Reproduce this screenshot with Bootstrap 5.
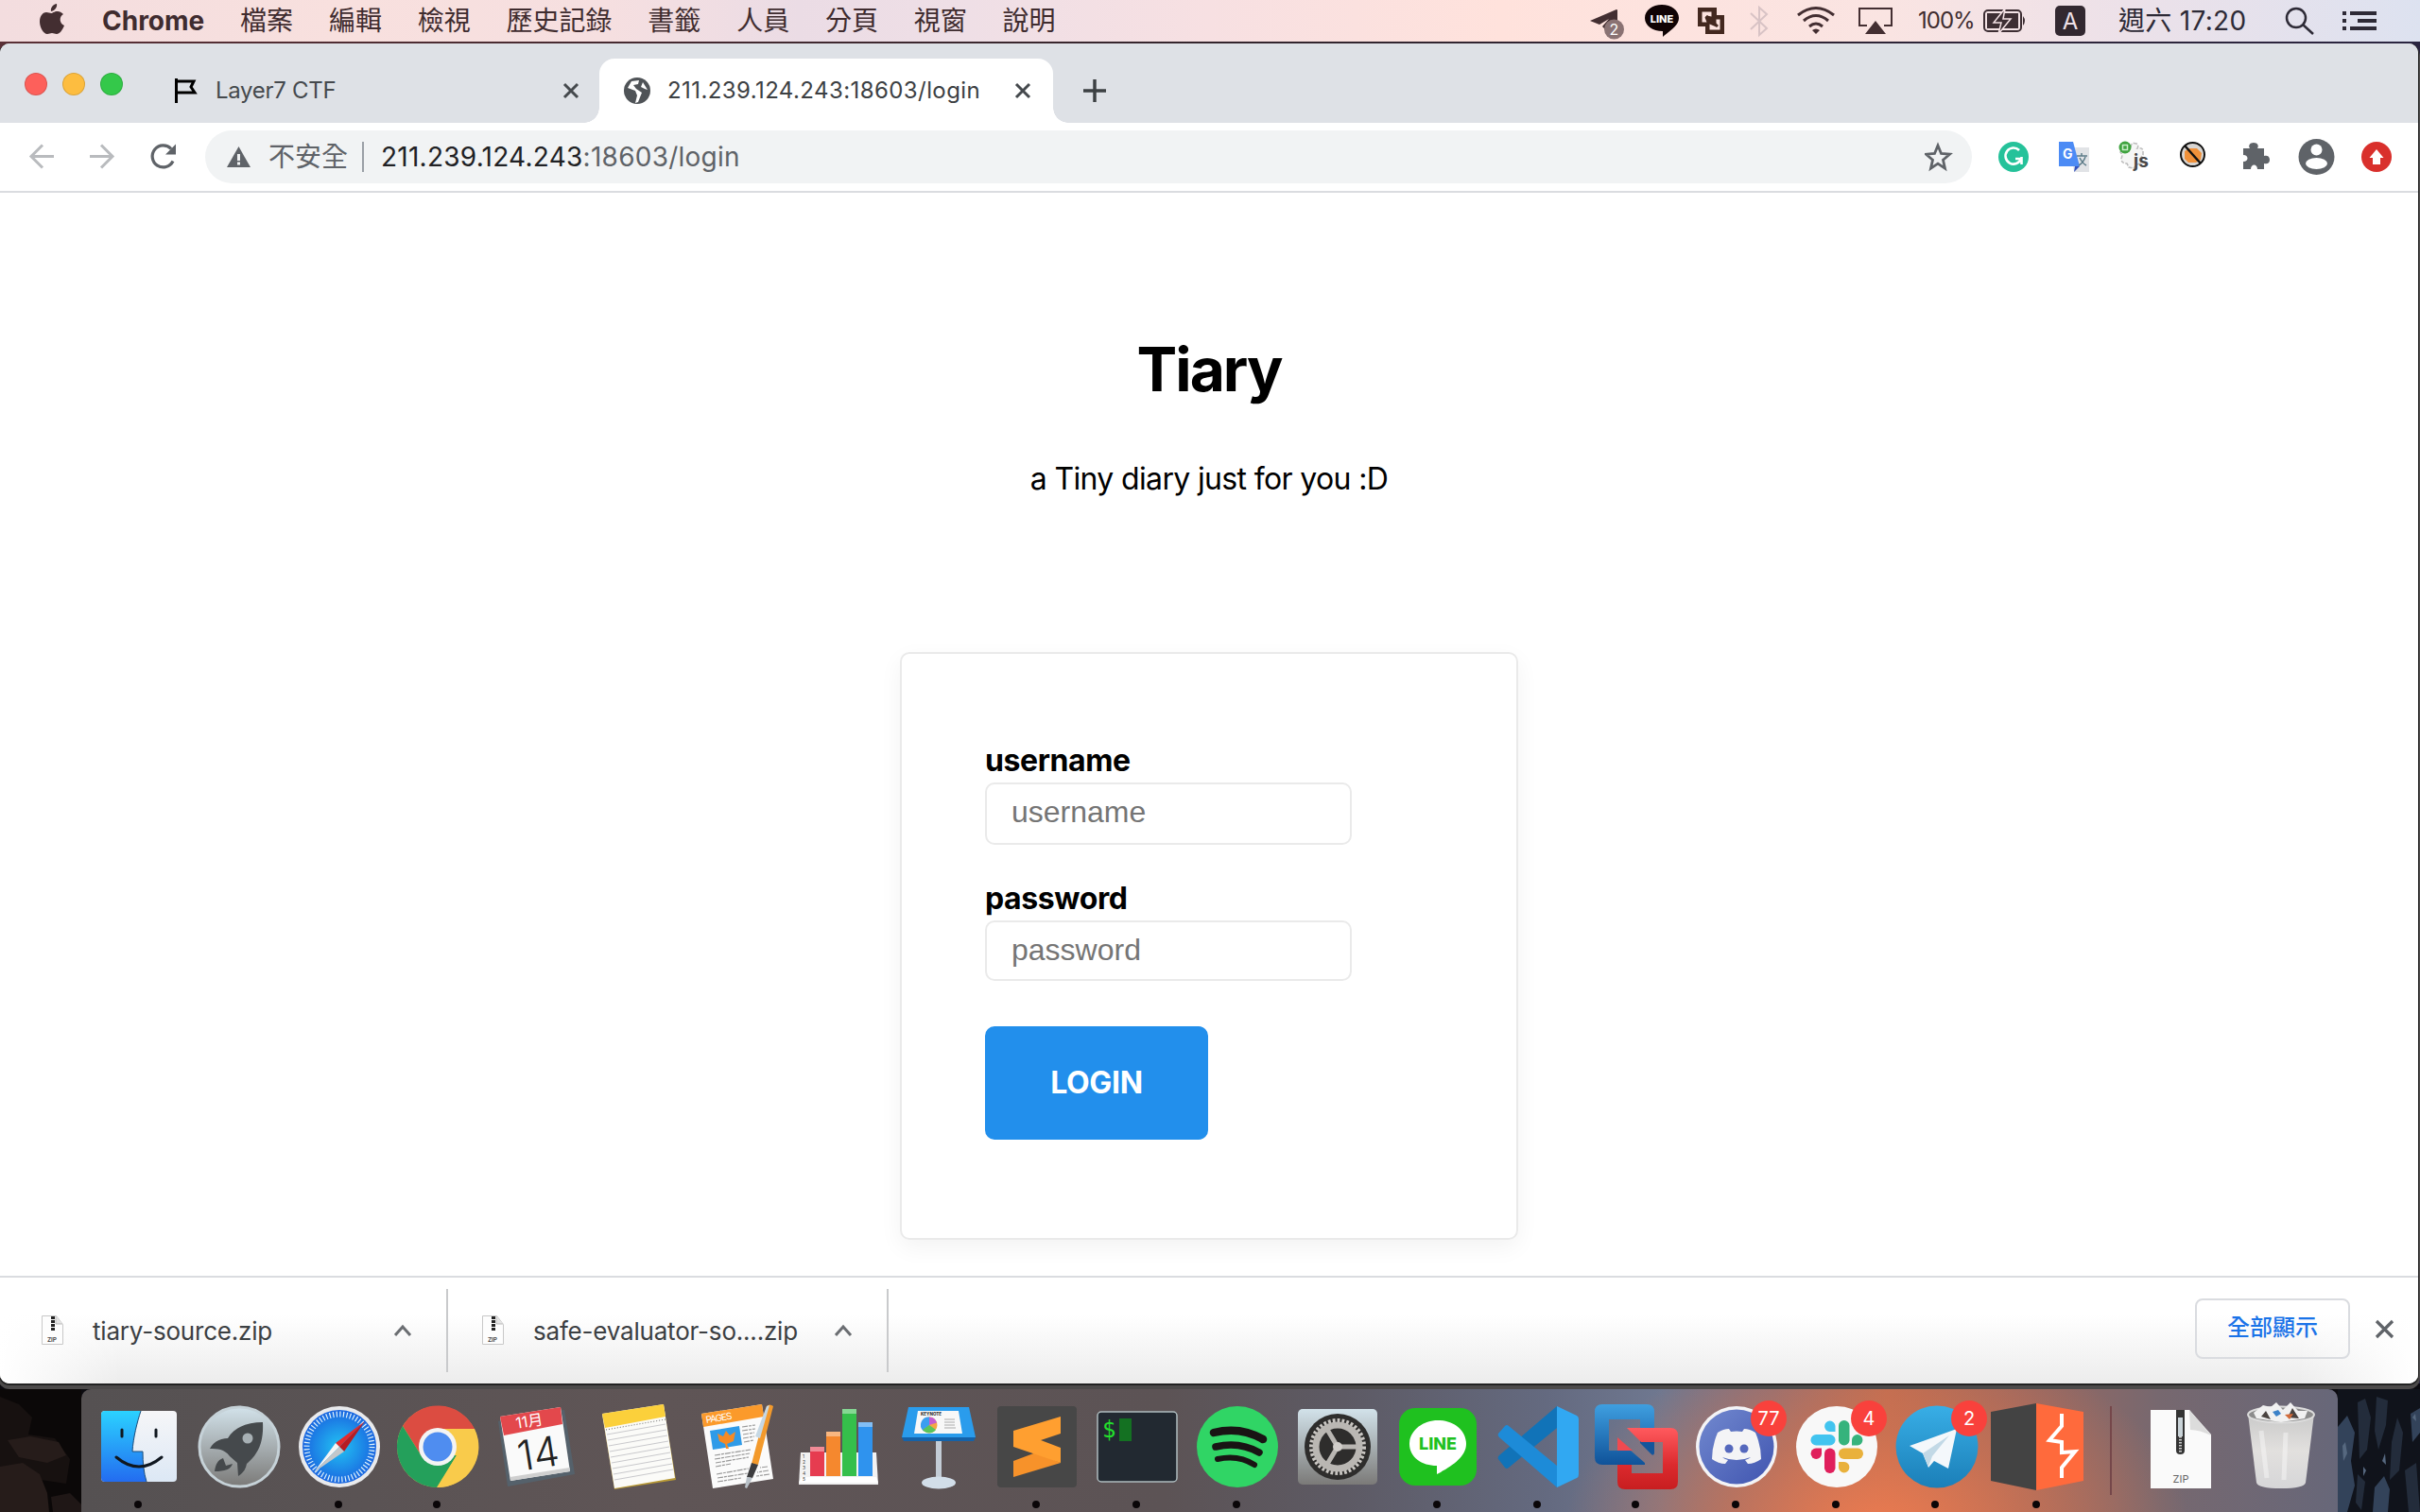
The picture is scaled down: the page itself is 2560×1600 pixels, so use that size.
<!DOCTYPE html>
<html lang="zh-Hant">
<head>
<meta charset="utf-8">
<title>Tiary</title>
<link href="https://cdn.jsdelivr.net/npm/bootstrap@5.3.0/dist/css/bootstrap.min.css" rel="stylesheet">
<style>
:root{--ui:Inter,"Noto Sans CJK TC",sans-serif}
body{width:2560px;height:1600px;overflow:hidden;background:#0c0b10;font-family:var(--ui);color:#000}
svg{display:block;flex:none}
.menubar{height:44px;background:linear-gradient(90deg,#f3dddf 0,#f8e0de 14%,#f6dfe0 25%,#ebdce5 33%,#efdfe6 40%,#f7e0e2 50%,#ffe2dc 62%,#fae4e2 78%,#ece1e9 88%,#dde2f0 100%);font-size:28px;line-height:44px;color:#3f2c2f;padding-left:108px}
.menus{gap:37.8px}
.pct{font-size:24px;width:65px;letter-spacing:-1px}
.mb-clock{color:#2d2a36;width:159px;letter-spacing:.3px}
.desk-edge{height:1420px;background:linear-gradient(90deg,#5a3036,#33242c 50%,#2a2540);padding-top:2px}
.win{width:2558px;height:1418px;border-radius:10px;background:#fff;overflow:hidden;box-shadow:0 1px 0 1px #222,0 4px 0 2px #4c4a4a}
.tabs{height:84px;background:#dee1e6;font-size:24px;color:#45494d}
.tab-idle{width:619px;height:68px;padding-left:26px}
.tab-idle span{width:366px;letter-spacing:-.3px}
.lights{gap:16px;padding:0 54px 14px 0}
.lights i{width:24px;height:24px;border-radius:50%;border:1px solid #0002}
.tab-live{position:relative;width:480px;height:68px;background:#fff;border-radius:16px 16px 0 0;margin-left:15px}
.tab-live span{width:366px;letter-spacing:.42px;color:#3c4043}
.tab-live:before,.tab-live:after{content:"";position:absolute;bottom:0;width:16px;height:16px}
.tab-live:before{left:-16px;background:radial-gradient(circle at 0 0,#0000 15.5px,#fff 16px)}
.tab-live:after{right:-16px;background:radial-gradient(circle at 100% 0,#0000 15.5px,#fff 16px)}
.tools{height:74px;border-bottom:2px solid #dadce0}
.omni{width:1869px;height:56px;border-radius:28px;background:#f1f3f4;font-size:28px;color:#5f6368}
.omni .insecure{width:99px}
.omni .vr{width:2px;height:32px;background:#9aa0a6;opacity:1;align-self:center}
.omni .url{margin-left:18px;letter-spacing:.25px}
.omni .host{color:#202124}
.page{height:1146px;padding-top:147px}
.title{font-size:64px;font-weight:700;line-height:80px;margin:0;letter-spacing:-2px}
.sub{font-size:32px;line-height:48px;margin:52px 0 159px;letter-spacing:-.65px}
.box{width:654px;height:622px;border:2px solid #eaeaea;border-radius:10px;box-shadow:0 8px 24px #0000000d;padding:90px 88px}
.box label{font-size:32px;font-weight:700;line-height:46px;display:block;height:46px;letter-spacing:-.4px}
.box .form-control{width:388px;height:66px;border:2px solid #eaeaea;border-radius:10px;padding:0 26px 4px;font:32px "Liberation Sans",sans-serif}
.box .form-control::placeholder{color:#757575;opacity:1}
.box .pw{height:64px;padding-bottom:2px}
.box .btn{width:236px;height:120px;border-radius:10px;background:#228fec;font-size:32px;font-weight:700;color:#fff;padding:0;letter-spacing:-.3px;margin-top:48px}
.shelf{height:114px;border-top:2px solid #dadce0;background:linear-gradient(90deg,#fff 0,#fff0 5%,#fff0 95%,#fff 100%),linear-gradient(#fff 35%,#ececec);font-size:26px;letter-spacing:-.2px;color:#3c4043}
.dl{height:88px;border-right:2px solid #c9cacc}
.dl span{width:319px}
.shelf-end{padding:0 25px 4px 0;gap:26px}
.all-btn{width:164px;height:64px;border:2px solid #dadce0;border-radius:8px;font-size:24px;font-weight:500;letter-spacing:0;color:#1a73e8;padding:0 0 2px}
.desk{height:136px;padding-top:6px}
.dock{width:2387px;height:130px;border-radius:10px 10px 0 0;padding-left:8px;background:radial-gradient(ellipse 330px 210px at 1900px 150px,#ec7b50 0,#cf7352b0 50%,#0000 100%),linear-gradient(90deg,#555152 0,#5f5556 25%,#5c5355 48%,#5d5a64 56%,#646a80 65%,#6f7890 70%,#8c7078 75%,#bf6c50 80%,#9b6860 86%,#77686f 92%,#676779 100%)}
</style>
<script src="https://cdn.jsdelivr.net/npm/bootstrap@5.3.0/dist/js/bootstrap.bundle.min.js"></script>
</head>
<body>
<nav class="menubar d-flex position-relative">
<svg class="position-absolute start-0 top-0" width="100" height="44"><path fill="#432e31" d="M60 4c1 4-3 8-6 8-1-4 3-8 6-8zM54 14c2 0 3-2 7-2 2 0 4 1 6 3-5 3-4 10 1 12-2 5-5 9-8 9-2 0-3-1-5-1s-3 1-5 1c-4 0-8-7-8-13 0-7 4-10 7-10 2 0 4 1 5 1z"/></svg>
<div class="menus d-flex"><b>Chrome</b><span>檔案</span><span>編輯</span><span>檢視</span><span>歷史記錄</span><span>書籤</span><span>人員</span><span>分頁</span><span>視窗</span><span>說明</span></div>
<div class="d-flex ms-auto">
<svg width="359" height="44" viewBox="1670 0 359 44"><path fill="#432e31" d="M1682 22l28-12q1 0 1 1v12c-6 2-9 6-9 12l-7-7 7-8-10 6z"/><circle cx="1707.500" cy="31" r="10.500" fill="#8a7273"/><path fill="#100304" d="M1758 5c10 0 18 6 18 14 0 7-7 12-16 19l-1 1v-6c-11 0-19-6-19-14s8-14 18-14z"/>
<path fill="#43281f" fill-rule="evenodd" d="M1796 8h20v8h8v20h-20v-8h-8zm4.500 4.500v11h5l-2-5 2-2 5 1v-5zm8 13v6h11v-11h-4v8z"/><path stroke="#43281f" stroke-width="3" d="M1805 17l12 11"/>
<text x="1707.500" y="37" font-size="16" fill="#fff" text-anchor="middle">2</text><text x="1758" y="24" font-size="11" font-weight="800" fill="#fff" text-anchor="middle">LINE</text>
<path fill="none" stroke="#d8c3c5" stroke-width="2" d="M1852 14l17 16-8 7V8l8 7-17 16"/>
<g fill="none" stroke="#432e31" stroke-width="3"><path d="M1902 16q19-15 38 0M1908 22q13-11 26 0M1914 28q7-6 14 0"/><path stroke-width="2" d="M1975 27h-8V9h34v18h-8"/></g><path fill="#432e31" d="M1917 32q4-3 8 0l-4 4zM1984 22l11 14h-22z"/></svg>
<span class="pct">100%</span>
<svg width="147" height="44" viewBox="2094 0 147 44"><rect x="2099" y="11" width="39" height="22" rx="4" fill="none" stroke="#3d2e33" stroke-width="2"/><path fill="#3d2e33" d="M2102 14h33v16h-33zM2140 17q4 5 0 10z"/><path fill="#3d2e33" stroke="#f4e2e5" stroke-width="1.500" d="M2121 9l-12 15h8l-3 12 13-16h-8z"/><rect x="2174" y="6" width="32" height="32" rx="5" fill="#322830"/><text x="2190" y="30.500" font-size="24" fill="#efe1e8" text-anchor="middle">A</text></svg>
<span class="mb-clock">週六 17:20</span>
<svg width="160" height="44" viewBox="2400 0 160 44"><g fill="none" stroke="#2d2a36" stroke-width="2.500"><circle cx="2429" cy="19" r="10"/><path d="M2436 26l11 10"/><path stroke-width="4" d="M2478 14h4M2478 22h4M2478 30h4M2486 14h28M2494 22h20M2486 30h28"/></g></svg>
</div>
</nav>
<div class="desk-edge">
<div class="win">
<div class="tabs d-flex align-items-end">
<div class="tab-idle d-flex align-items-center"><div class="lights d-flex"><i style="background:#fd605b"></i><i style="background:#fdbd40"></i><i style="background:#34c84a"></i></div>
<svg width="44" height="34" viewBox="184 79 44 34"><path fill="none" stroke="#000" stroke-width="3" d="M186.500 83v26M187 86h18l-3 6 4 6h-18"/></svg><span>Layer7 CTF</span><svg width="20" height="20"><path stroke="#45494d" stroke-width="3" d="M3 3l14 14M17 3L3 17"/></svg></div>
<div class="tab-live d-flex align-items-center"><svg width="72" height="34" viewBox="634 79 72 34"><circle cx="674" cy="96" r="14" fill="#4f5357"/><path fill="#fff" d="M676 85l-8 1-4 7 8 3 2 5-2 8 3-1 2-5 2-5-6-4-3-4 5-1zM680 87l5 8-3-1-4-2z"/></svg><span>211.239.124.243:18603/login</span><svg width="20" height="20"><path stroke="#45494d" stroke-width="3" d="M3 3l14 14M17 3L3 17"/></svg></div>
<svg width="70" height="68" viewBox="1114 62 70 68"><path stroke="#3c4043" stroke-width="3.500" d="M1146 96h24M1158 84v24"/></svg>
</div>
<div class="tools d-flex align-items-center">
<svg width="217" height="56" viewBox="0 138.500 217 56"><g fill="none" stroke="#b9bbbe" stroke-width="3"><path d="M57 166H33M45 154l-12 12 12 12M95 166h24M107 154l12 12-12 12"/><path stroke="#5f6368" stroke-width="3.200" d="M183 171a11.500 11.500 0 1 1-2-13"/></g><path fill="#5f6368" d="M186 153v11h-11z"/></svg>
<div class="omni d-flex align-items-center"><svg width="67" height="56" viewBox="217 138 67 56"><path fill="#5f6368" d="M252.500 155l12.500 22h-25z"/><path stroke="#f1f3f4" stroke-width="3" d="M252.500 163v7M252.500 171.500v3"/></svg><span class="insecure">不安全</span><span class="vr"></span><span class="url"><span class="host">211.239.124.243</span>:18603/login</span><svg class="ms-auto" width="50" height="56" viewBox="2036 138 50 56"><path fill="none" stroke="#5f6368" stroke-width="2.800" d="M2050 154l3.500 8.500 9 .7-7 6 2 9-7.500-5-7.500 5 2-9-7-6 9-.7z"/></svg></div>
<svg width="472" height="70" viewBox="2086 131 472 70"><circle cx="2130" cy="166" r="16" fill="#25c29a"/><path fill="none" stroke="#fff" stroke-width="2.600" d="M2136 159a8.500 8.500 0 1 0 2 9h-6M2138.500 166v8"/>
<path fill="#e1e3e6" d="M2190 156h20v26h-16z"/><path fill="#4c8bf5" d="M2178 150h15l7 26h-22z"/><path fill="#3352bd" d="M2195 176h5l-6 6z"/><text x="2182" y="168" font-size="14" font-weight="700" fill="#fff">G</text><path fill="none" stroke="#5d7c89" stroke-width="1.500" d="M2197 165h11M2202 162v3M2206 166q-2 6-7 9M2200 167q3 6 7 8"/>
<path fill="#f6f6f6" stroke="#bdbdbd" stroke-width="1.600" stroke-dasharray="4 1.500" d="M2249 154l5 2q0-6 6-4 3 2 1 5 6-1 6 3v4l-3 4 3 4-6 2-4 4-5-1-2-4q-6 0-6-5 2-4-1-7z"/><circle cx="2248" cy="156" r="6.500" fill="#3fa33f"/><path fill="none" stroke="#c9efc9" stroke-width="1.500" d="M2245.500 153.500h5v5h-5z"/><text x="2257" y="177" font-size="19" font-weight="700" fill="#484848">js</text>
<circle cx="2319.500" cy="163.500" r="12.500" fill="#d8d5d2" stroke="#111" stroke-width="2"/><path fill="#f0913a" d="M2311 160l5-3h8l5 5-1 7-5 3h-8l-4-4z"/><path stroke="#111" stroke-width="2.500" d="M2311 154l17 19"/>
<path fill="#5f6368" d="M2373 157h7c-2-3 0-6 4-6s6 3 4 6h7v8c3-1 6 0 6 4s-3 5-6 4v6h-7c0-6-7-6-7 0h-8v-8c6 0 6-7 0-7z"/>
<circle cx="2450.500" cy="166" r="19" fill="#5f6368"/><circle cx="2450.500" cy="158.500" r="6" fill="#fff"/><ellipse cx="2450.500" cy="173" rx="11.500" ry="6" fill="#fff"/>
<circle cx="2514" cy="166" r="16" fill="#d9302c"/><path fill="#fff" d="M2514 158l7.500 9h-3.500v7h-8v-7h-3.500z"/></svg>
</div>
<main class="page d-flex flex-column align-items-center">
<h1 class="title">Tiary</h1>
<p class="sub">a Tiny diary just for you :D</p>
<form class="box">
<label for="u">username</label><input id="u" class="form-control" placeholder="username">
<label for="p" style="margin-top:34px">password</label><input id="p" class="form-control pw" placeholder="password">
<button type="button" class="btn">LOGIN</button>
</form>
</main>
<div class="shelf d-flex align-items-center">
<div class="dl d-flex align-items-center" style="width:474px"><svg width="98" height="40" viewBox="0 1386 98 40"><g id="zf"><path fill="#fdfdfd" stroke="#c8c8c8" d="M44.500 1390.500h15l7 9v21h-22z"/><path fill="#e4e4e4" stroke="#bbb" d="M59 1391v8h7"/><path stroke="#222" stroke-width="4" stroke-dasharray="3 1" d="M56 1391v16"/><text x="50" y="1418" font-size="6.500" font-weight="600" fill="#444">ZIP</text></g></svg><span>tiary-source.zip</span><svg width="20" height="14"><path fill="none" stroke="#6b6e72" stroke-width="3" d="M1 12l8-9 8 9"/></svg></div>
<div class="dl d-flex align-items-center" style="width:466px"><svg width="90" height="40" viewBox="8 1386 90 40"><use href="#zf"/></svg><span>safe-evaluator-so....zip</span><svg width="20" height="14"><path fill="none" stroke="#6b6e72" stroke-width="3" d="M1 12l8-9 8 9"/></svg></div>
<div class="shelf-end ms-auto d-flex align-items-center"><button class="btn all-btn">全部顯示</button><svg width="21" height="22"><path stroke="#5f6368" stroke-width="3.200" d="M2 3l17 17M19 3L2 20"/></svg></div>
</div>
</div>
</div>
<footer class="desk d-flex">
<svg width="86" height="130" viewBox="0 1470 86 130"><path fill="#0b0808" d="M0 1470h86v130H0z"/><path fill="#171110" d="M0 1478l20 8 14 14-4 18 28 4 16 22-4 26-40-6-30-6z"/><path fill="#261c1a" d="M0 1552l24-4 18 12 8 20 2 20H0zM8 1524l24-4 30 6 8 14-20 8-30-6z"/><path fill="#1f1716" d="M54 1584l20-4 12 12v8H56z"/></svg>
<div class="dock d-flex">
<svg width="2379" height="130" viewBox="94 1470 2379 130">
<defs>
<linearGradient id="gb" x2="0" y2="1"><stop stop-color="#2bd2ff"/><stop offset="1" stop-color="#236cf0"/></linearGradient>
<linearGradient id="gw" x2="0" y2="1"><stop stop-color="#f6f6f8"/><stop offset="1" stop-color="#dce8f5"/></linearGradient>
<linearGradient id="gg" x2="0" y2="1"><stop stop-color="#d2e2ea"/><stop offset="1" stop-color="#7b7a78"/></linearGradient>
<radialGradient id="gs"><stop stop-color="#22c3f3"/><stop offset="1" stop-color="#1a66e0"/></radialGradient>
<linearGradient id="gt" x2="0" y2="1"><stop stop-color="#38aee6"/><stop offset="1" stop-color="#1b7fb8"/></linearGradient>
<linearGradient id="gr" x2="0" y2="1"><stop stop-color="#ff5a5e"/><stop offset=".6" stop-color="#dc2a2e"/><stop offset="1" stop-color="#c81e20"/></linearGradient>
<linearGradient id="gv" x2="0" y2="1"><stop stop-color="#3f9fe0"/><stop offset="1" stop-color="#0f5299"/></linearGradient>
<linearGradient id="gd" x2="1" y2="1"><stop stop-color="#7289cf"/><stop offset="1" stop-color="#4055b0"/></linearGradient>
<linearGradient id="gtr" x2="0" y2="1"><stop stop-color="#c9c9c9"/><stop offset=".5" stop-color="#e2e0de"/><stop offset="1" stop-color="#d6d6d8"/></linearGradient>
</defs>
<!-- Finder -->
<rect x="107" y="1493" width="80" height="75" rx="4" fill="url(#gw)"/><path fill="url(#gb)" d="M111 1493h38c-4 12-8 28-9 43h11c0 12 1 22 4 32h-44q-4 0-4-4v-67q0-4 4-4z"/><path fill="none" stroke="#1c4d7a" d="M149 1493c-4 12-8 28-9 43h11c0 12 1 22 4 32"/><path fill="none" stroke="#10171f" stroke-width="3" stroke-linecap="round" d="M129 1513v7M165 1513v7M123 1542q24 20 48 0"/>
<!-- Launchpad -->
<circle cx="253" cy="1531" r="42" fill="url(#gg)" stroke="#c6d2d8" stroke-width="3"/><path fill="#45494c" d="M278 1505c1 20-4 33-17 44-1 6-4 10-9 13l-1-14-8-7c-6-8-13-8-21-8 4-8 12-11 19-11 6-11 20-17 37-17z"/><path fill="#45494c" d="M236 1543l3 8 7-2c-2 6-8 8-19 8 1-7 3-12 9-14z"/><circle cx="262" cy="1522" r="5.500" fill="#a7b0b4"/>
<!-- Safari -->
<circle cx="359" cy="1531" r="43" fill="#e9eaec"/><circle cx="359" cy="1531" r="39" fill="url(#gs)"/><circle cx="359" cy="1531" r="34.500" fill="none" stroke="#dff1fb" stroke-width="6" stroke-dasharray="1.200 2.414"/><path fill="#e32a2c" d="M386 1504l-31 23 4 4z"/><path fill="#b71c22" d="M386 1504l-27 27 5 5z"/><path fill="#f5f5f5" d="M332 1558l23-31 4 4z"/><path fill="#c3c7ca" d="M332 1558l27-27 5 5z"/>
<!-- Chrome -->
<circle cx="463" cy="1531" r="43" fill="#f9cb4b"/><path fill="#dc4c41" d="M426 1509a43 43 0 0 1 76 3h-39l-17 29z"/><path fill="#24a05b" d="M426 1509a43 43 0 0 0 37 65l20-34-37 1z"/><path fill="#f9cb4b" d="M462 1574l21-34-1-28h20a43 43 0 0 1-40 62z"/><circle cx="463" cy="1531" r="20" fill="#f4f4f4"/><circle cx="463" cy="1531" r="15.500" fill="#4f8df0"/>
<!-- Calendar -->
<path fill="#55616b" d="M527 1504l70-12 11 68-71 13z"/><path fill="#fafafa" d="M529 1499l64-10 10 68-63 10z"/><path fill="#cfcfcf" d="M539.500 1563l63-10 .5 4-63 10z"/><path fill="#e3484c" d="M529 1499l64-10 2 18-62 12z"/><g transform="rotate(-9 566 1530)"><text x="564" y="1509" font-size="16" fill="#fff" text-anchor="middle">11月</text><text x="568" y="1554" font-size="44" font-weight="300" fill="#222" text-anchor="middle" textLength="44" lengthAdjust="spacingAndGlyphs">14</text></g>
<!-- Notes -->
<path fill="#b99a35" d="M637 1497l65-9 13 78-65 10z"/><path fill="#fbfbf8" d="M637 1496l65-10 12 78-64 11z"/><path fill="#fbd03b" d="M637 1496l65-10 2 13-64 12z"/><path stroke="#c9c9cc" stroke-width="1" d="M642 1518l62-11M643 1524l62-11M644 1530l62-11M645 1536l62-11M646 1542l62-11M647 1548l62-11M648 1554l62-11M649 1560l62-11M650 1566l62-11"/><path stroke="#666" stroke-dasharray="1 2" d="M641 1513l63-11"/>
<!-- Pages -->
<path fill="#fbfbfb" d="M742 1496l64-10 12 79-64 10z"/><path fill="#fb9a2b" d="M742 1496l64-10 2 13-64 11z"/><text transform="rotate(-9 747 1505)" x="747" y="1506" font-size="10" fill="#fff" textLength="28">PAGES</text><path fill="#2f9be8" d="M751 1514l31-5 3 20-31 5z"/><path fill="#f58a24" d="M759 1517l6 3 3-6 4 5 6-4-2 10-7 3 2 5h-3l-1-5-6-3z"/><path stroke="#999" stroke-width="1.200" stroke-dasharray="6 1 3 1" d="M785 1510l14-2M785 1514l14-2M786 1518l12-2M786 1522l12-2M787 1526l10-2M756 1540l38-6M756 1544l37-6M757 1548l35-6M757 1552l16-3M758 1560l34-6M759 1564l32-5M759 1568l25-4M812 1552l-8 1M813 1556l-12 2M814 1560l-14 2"/><path fill="#f39a2c" d="M811 1488q3-3 7 0l-16 62-7-1z"/><path fill="#c6d8e4" d="M811 1488l3-1-10 35-5-2z"/><path fill="#3d3d3f" d="M795 1548l7 2-6 14-6-1z"/><path fill="#b9c1c8" d="M790 1563l6 1-6 11-2-1z"/>
<!-- Numbers -->
<path fill="#f2f2f2" d="M847 1537h80l2 34h-84z"/><path fill="#fff" d="M848 1563h79l2 6h-84z"/><g font-size="5" fill="#444"><text x="849" y="1543">1</text><text x="849" y="1549">2</text><text x="849" y="1555">3</text><text x="849" y="1561">4</text><text x="849" y="1567">5</text></g><path fill="#e63c50" d="M857 1531h15v31h-15z"/><path fill="#f5882e" d="M874 1515h15v47h-15z"/><path fill="#35bf4b" d="M891 1491h15v71h-15z"/><path fill="#2f93ee" d="M908 1505h15v57h-15z"/><path fill="#fff" opacity=".4" d="M857 1531h15v5h-15zM874 1515h15v5h-15zM891 1491h15v5h-15zM908 1505h15v5h-15z"/>
<!-- Keynote -->
<path fill="#c3ccd6" d="M990 1525h6v44h-6z"/><ellipse cx="993" cy="1569" rx="18" ry="6.500" fill="#d2dee9"/><path fill="#2a9cec" d="M961 1489h64l7 32h-78z"/><path fill="#1562a8" d="M954 1521h78l-2 4h-74z"/><path fill="#f8f8f8" d="M971 1493h43l4 24h-51z"/><circle cx="983" cy="1508" r="8.500" fill="#f5a545"/><path fill="#3a9ef0" d="M983 1508v-8.500a8.500 8.500 0 0 0-6 15z"/><path fill="#59c45c" d="M983 1508l-7 5a9 9 0 0 0 14 0z"/><path fill="#c45cd0" d="M983 1508v-8.500a8.500 8.500 0 0 1 8 6z"/><text x="974" y="1498" font-size="4.500" font-weight="800" fill="#333">KEYNOTE</text><path stroke="#aaa" d="M999 1502h11M999 1505h11M999 1508h11M999 1511h12"/>
<!-- Sublime Text -->
<rect x="1055" y="1488" width="84" height="86" rx="4" fill="#474747"/><path fill="#f7922a" d="M1072 1546l24-9 26 11-50 15z"/><path fill="#ff9f30" d="M1122 1499v18l-21 7 21 8v16l-50-17v-17z"/>
<!-- Terminal -->
<rect x="1161" y="1494" width="84" height="74" rx="4" fill="#222931" stroke="#aebcbf" stroke-width="1.500"/><text x="1166" y="1521" font-family="DejaVu Sans Mono,monospace" font-size="24" fill="#22e02c">$</text><path fill="#147122" d="M1184 1501h13v24h-13z"/>
<!-- Spotify -->
<circle cx="1309" cy="1531" r="43" fill="#30d565"/><g fill="none" stroke="#191414" stroke-linecap="round"><path stroke-width="8.500" d="M1284 1516q28-7 52 7"/><path stroke-width="7.500" d="M1286 1531q25-6 46 6"/><path stroke-width="6" d="M1288 1544q22-5 39 6"/></g>
<!-- System Preferences -->
<rect x="1373" y="1491" width="84" height="80" rx="5" fill="url(#gg)"/><circle cx="1415" cy="1531" r="35" fill="#2e2d2c"/><circle cx="1415" cy="1531" r="28" fill="none" stroke="#c9c6c2" stroke-width="4" stroke-dasharray="2.800 2.064"/><circle cx="1415" cy="1531" r="23" fill="none" stroke="#bab7b3" stroke-width="7"/><path stroke="#b9b6b2" stroke-width="5" d="M1415 1531h22M1415 1531l-12-20M1415 1531l-12 20"/><circle cx="1415" cy="1531" r="5" fill="#d0cdc9"/>
<!-- LINE -->
<rect x="1480" y="1490" width="82" height="82" rx="17" fill="#1fc11f"/><path fill="#fff" d="M1521 1503c16 0 30 10 30 25 0 14-16 24-31 32v-9c-16 0-29-9-29-23s14-25 30-25z"/><text x="1521" y="1534" font-size="18" font-weight="800" fill="#1fc11f" text-anchor="middle" textLength="40">LINE</text>
<!-- Visual Studio Code -->
<path fill="#1173b8" d="M1585 1544l7 9q2 2 4 0l51-42v-23l-61 52q-2 2-1 4z"/><path fill="#1d8bd8" d="M1585 1517l7-8q2-2 4 0l51 42v23l-61-53q-2-2-1-4z"/><path fill="#31a8f2" d="M1647 1488l21 10q2 1 2 4v58q0 3-2 4l-21 10z"/>
<!-- VMware Fusion -->
<path fill="url(#gv)" d="M1695 1486h47q8 0 8 8v17h-15v-9h-33v33h23l15 13v2h-45q-8 0-8-8v-48q0-8 8-8z"/><path fill="#14559b" d="M1735 1525h15v13q-1 3-3 1l-12-12z"/><path fill="url(#gr)" d="M1721 1511h46q8 0 8 8v49q0 8-8 8h-48q-8 0-8-8v-18h15v9h33v-33h-23z"/><path fill="#f04a50" d="M1711 1521l16 14h-16z"/>
<!-- Discord -->
<circle cx="1837" cy="1531" r="43" fill="#f4f4f6"/><circle cx="1837" cy="1531" r="39.500" fill="url(#gd)"/><path fill="#f4f4f6" d="M1817 1516q6-4 12-4l2 3q6-1 12 0l2-3q6 0 12 4 6 14 6 28-7 5-14 5l-3-4q4-1 6-3-15 6-30 0 2 2 6 3l-3 4q-7 0-14-5 0-14 6-28z"/><circle cx="1829" cy="1533" r="4.500" fill="#5568bd"/><circle cx="1845" cy="1533" r="4.500" fill="#5568bd"/>
<!-- Slack -->
<circle cx="1943" cy="1531" r="43" fill="#f8f8f8"/><g fill="#42c4ef"><rect x="1915.500" y="1518" width="26" height="11.500" rx="5.700"/><path d="M1941.500 1515h-6a5.700 5.700 0 1 1 6-6z"/></g><g fill="#36b37c"><rect x="1945" y="1503" width="11.500" height="26.500" rx="5.700"/><path d="M1959 1529.500v-6a5.700 5.700 0 1 1 6 6z"/></g><g fill="#e01f5c"><rect x="1930" y="1532.500" width="11.500" height="26.500" rx="5.700"/><path d="M1927 1532.500v6a5.700 5.700 0 1 1-6-6z"/></g><g fill="#e9b13c"><rect x="1945" y="1532.500" width="26" height="11.500" rx="5.700"/><path d="M1945 1547h6a5.700 5.700 0 1 1-6 6z"/></g>
<!-- Telegram -->
<circle cx="2049" cy="1531" r="43.500" fill="url(#gt)"/><path fill="#f4f8fb" d="M2020 1530l50-18-9 42-15-8-6 7-6-15z"/><path fill="#c2d9e6" d="M2034 1538l28-19-18 22-4 11z"/>
<!-- Burp Suite -->
<path fill="#434343" d="M2106 1494l48-9v92l-48-10z"/><path fill="#ff6a3c" d="M2154 1485l50 9v73l-50 10z"/><path fill="none" stroke="#fff" stroke-width="4" d="M2181 1496v13l-13 15 13 2v11l14-1-14 17v11"/>
<path stroke="#75474a" stroke-width="2" d="M2233 1488v94"/>
<!-- Zip archive -->
<path fill="#fafafa" d="M2275 1492h41l23 26v57h-64z"/><path fill="#dcdcdc" d="M2316 1492l1 21q10 0 22 6z"/><path fill="#333" d="M2302 1492h9v43q0 4-4.500 4t-4.500-4z"/><path stroke="#ccc" stroke-width="3" stroke-dasharray="1.500 1.500" d="M2306.500 1520v17"/><path fill="#c9d3d8" d="M2304 1500h5v20h-5z"/><text x="2307" y="1569" font-size="11" fill="#666" text-anchor="middle">ZIP</text>
<!-- Trash -->
<path fill="url(#gtr)" d="M2378 1496l9 73q2 6 26 6t26-6l9-73z"/><ellipse cx="2413" cy="1497" rx="35" ry="8.500" fill="#8c8c8c" stroke="#dcdcdc" stroke-width="2"/><path fill="#f1f1f1" d="M2384 1495l10-8 8 2 6-5 7 8 8-8 8 9 10 0-3 8-25 4-26-4z"/><path fill="#4a4340" d="M2392 1499l5-6 5 9zM2420 1500l5-10 7 11z"/><path fill="#3c82c8" d="M2404 1494l6-2 3 4-5 3z"/><path fill="#d06a3a" d="M2417 1497l5 5 4-6z"/><path stroke="#fff" opacity=".4" stroke-width="5" d="M2392 1514l6 50M2418 1516l-2 50"/>
<g fill="#f9413c"><circle cx="1871" cy="1501" r="19"/><circle cx="1977" cy="1501" r="19"/><circle cx="2083" cy="1501" r="19"/></g><g font-size="20" fill="#fff" text-anchor="middle"><text x="1871" y="1508">77</text><text x="1977" y="1508">4</text><text x="2083" y="1508">2</text></g>
<path stroke="#0a0608" stroke-width="8" stroke-linecap="round" d="M146 1592h0M358 1592h0M462 1592h0M1096 1592h0M1202 1592h0M1308 1592h0M1520 1592h0M1626 1592h0M1730 1592h0M1836 1592h0M1942 1592h0M2047 1592h0M2154 1592h0"/>
</svg>
</div>
<svg width="87" height="130" viewBox="2473 1470 87 130"><path fill="#10131b" d="M2473 1470h87v130h-87z"/><path fill="#33435a" d="M2473 1510l10-12 8 18-4 30 4 26-8 28h-10zM2512 1574l10-12 6 14-2 24h-16zM2550 1496l10-6v26l-8 10z"/><path fill="#232c3b" d="M2494 1484l8-4 6 20-4 34-8 10zM2514 1478l12 4-2 26-8 26-4-20zM2536 1500l6 16-4 40-10 10 2-40zM2544 1556l12-8 4 52h-12zM2494 1560l8 8-4 30-6-8z"/><path fill="#56687f" d="M2478 1530l3-4 2 12-4 8zM2520 1546l3-8 1 12zM2552 1500l3-4 1 8zM2500 1552l3 4-3 6z"/></svg>
</footer>
</body>
</html>
